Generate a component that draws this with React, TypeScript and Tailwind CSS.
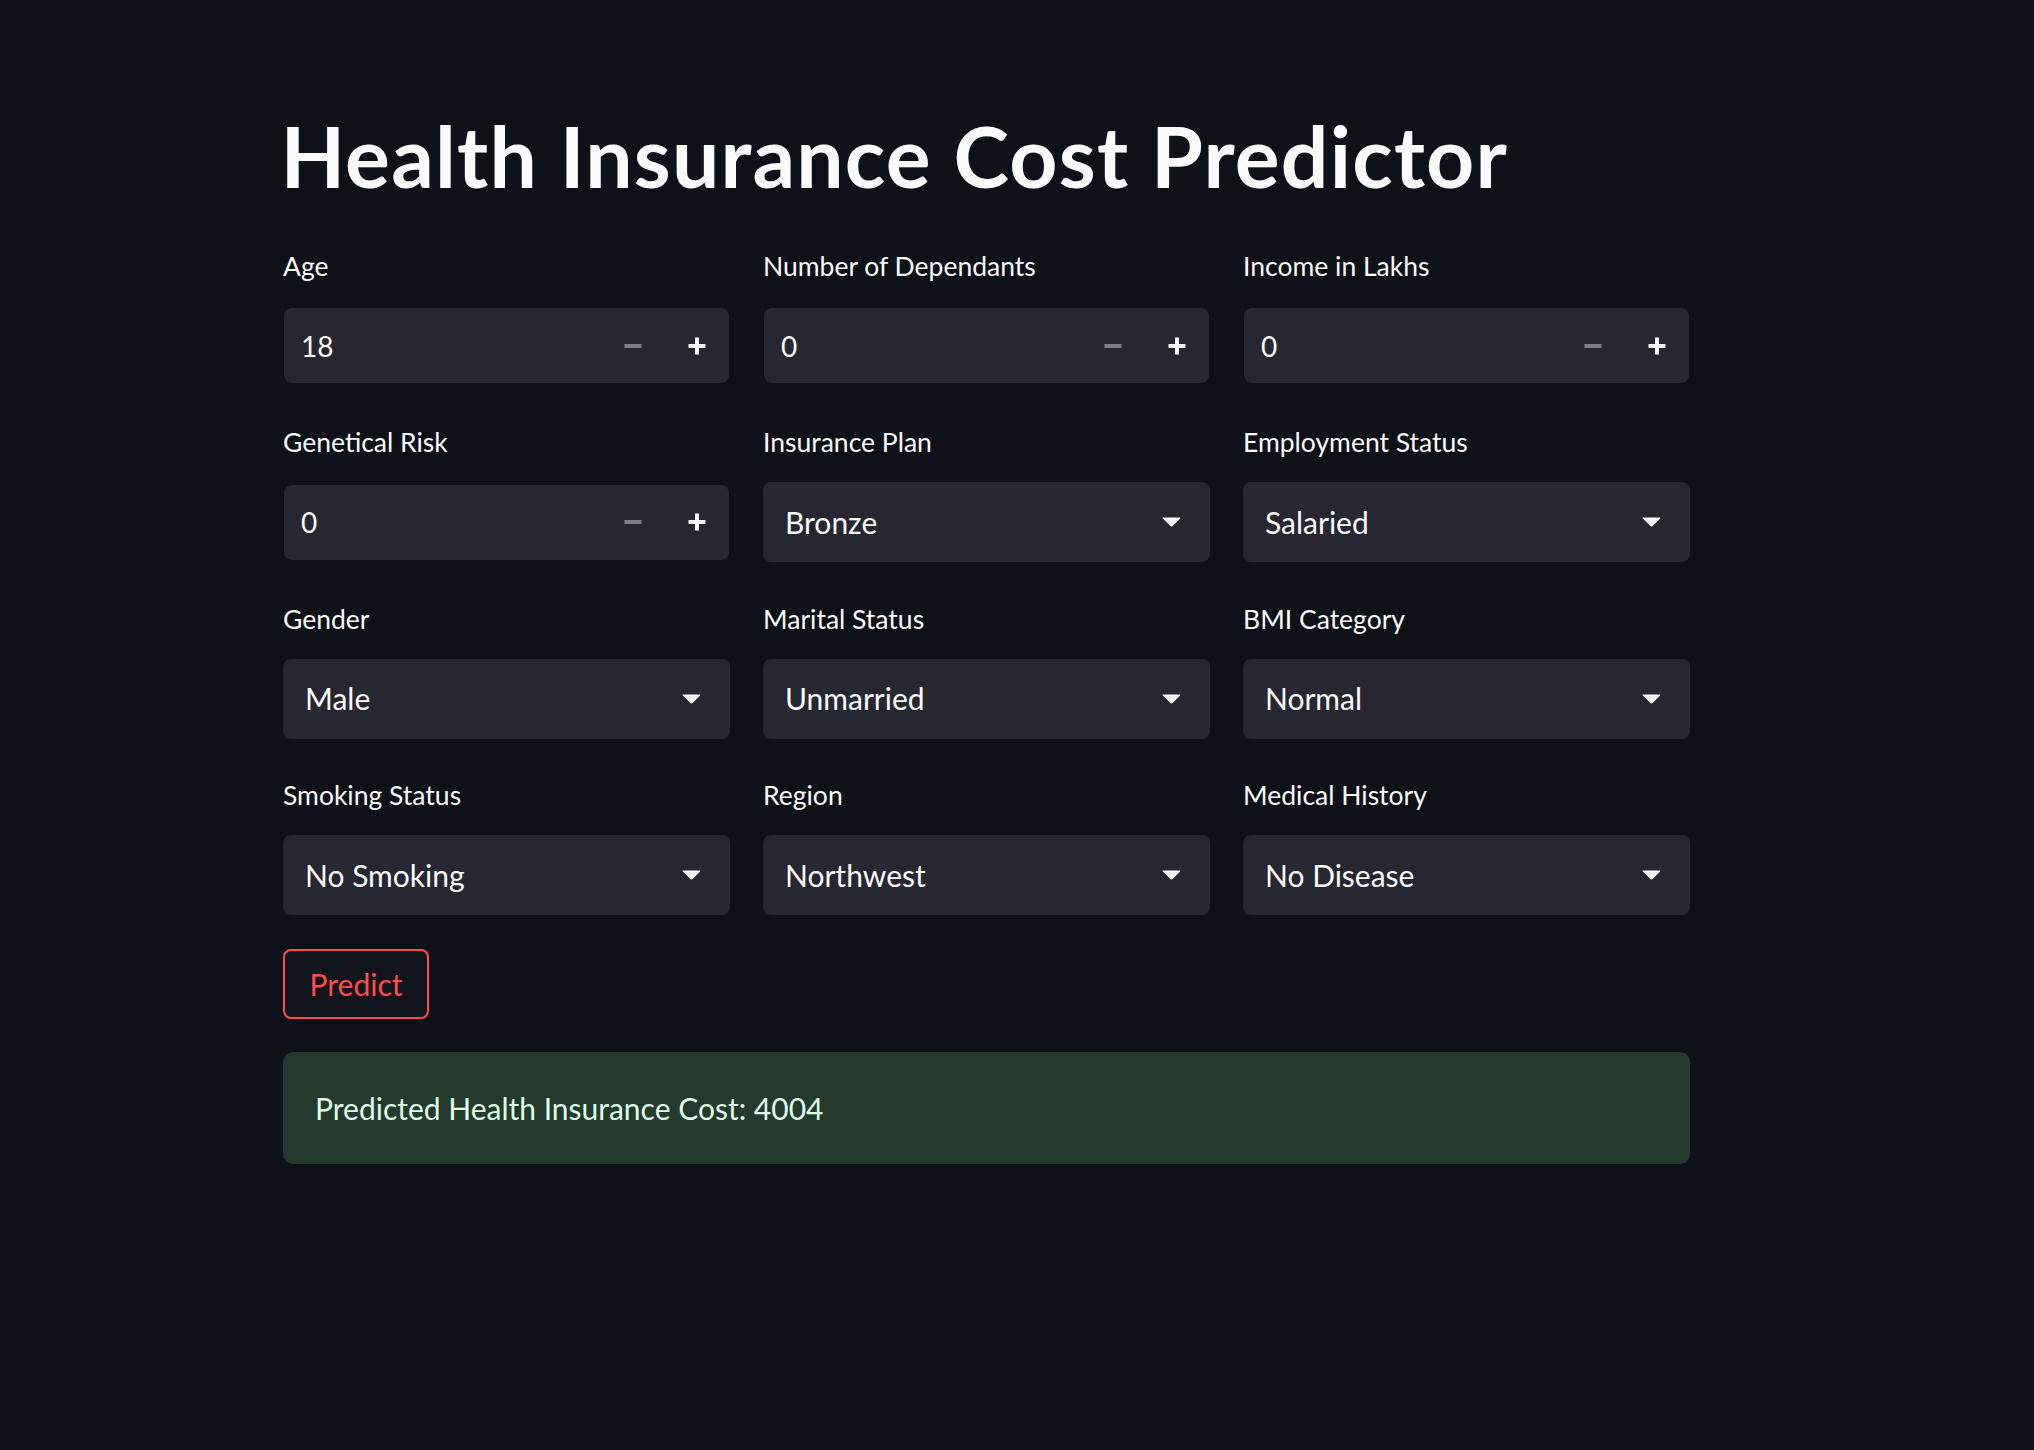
import React from "react";

function MinusIcon() {
  return (
    <svg width="18" height="18" viewBox="0 0 18 18">
      <rect x="0.5" y="7" width="17" height="4" rx="0.5" fill="#7d7f8c" />
    </svg>
  );
}

function PlusIcon() {
  return (
    <svg width="18" height="18" viewBox="0 0 18 18">
      <rect x="0.5" y="7" width="17" height="4" rx="0.5" fill="#fafafa" />
      <rect x="7" y="0.5" width="4" height="17" rx="0.5" fill="#fafafa" />
    </svg>
  );
}

function Caret() {
  return (
    <svg width="19" height="10" viewBox="0 0 19 10">
      <path d="M1.2 0.5 H17.8 Q19 0.5 18.2 1.4 L10.3 9.2 Q9.5 10 8.7 9.2 L0.8 1.4 Q0 0.5 1.2 0.5 Z" fill="#fafafa" />
    </svg>
  );
}

function Label({ text }: { text: string }) {
  return <div className="mb-[24px] pt-[1.5px] text-[26.5px] leading-[32px] text-[#fafafa]">{text}</div>;
}

function NumberField({ label, value }: { label: string; value: string }) {
  return (
    <div>
      <Label text={label} />
      <div className="h-[80px] px-[1px] py-[2.5px]">
        <div className="flex h-full items-center rounded-[8px] bg-[#262730]">
          <span className="flex-1 pl-[17px] text-[28px] text-[#fafafa]">{value}</span>
          <div className="flex w-[64px] items-center justify-center">
            <MinusIcon />
          </div>
          <div className="flex w-[64px] items-center justify-center">
            <PlusIcon />
          </div>
        </div>
      </div>
    </div>
  );
}

function SelectField({ label, value }: { label: string; value: string }) {
  return (
    <div>
      <Label text={label} />
      <div className="flex h-[80px] items-center rounded-[8px] bg-[#262730] pl-[22px] pr-[29px]">
        <span className="flex-1 text-[30px] text-[#fafafa]">{value}</span>
        <Caret />
      </div>
    </div>
  );
}

export default function App() {
  return (
    <div className="min-h-[1450px] w-full bg-[#0e1117] font-[Lato,sans-serif] text-[#fafafa]">
      <div className="ml-[283px] w-[1407px] pt-[106px]">
        <h1 className="-ml-[2.5px] text-[84px] font-bold leading-[1.2] tracking-[1.2px] text-[#fafafa]">
          Health Insurance Cost Predictor
        </h1>
        <div className="mt-[41.5px] grid grid-cols-3 gap-x-[33px] gap-y-[39px]">
          <NumberField label="Age" value="18" />
          <NumberField label="Number of Dependants" value="0" />
          <NumberField label="Income in Lakhs" value="0" />
          <NumberField label="Genetical Risk" value="0" />
          <SelectField label="Insurance Plan" value="Bronze" />
          <SelectField label="Employment Status" value="Salaried" />
          <SelectField label="Gender" value="Male" />
          <SelectField label="Marital Status" value="Unmarried" />
          <SelectField label="BMI Category" value="Normal" />
          <SelectField label="Smoking Status" value="No Smoking" />
          <SelectField label="Region" value="Northwest" />
          <SelectField label="Medical History" value="No Disease" />
        </div>
        <button className="mt-[34px] flex h-[70px] w-[146px] items-center justify-center rounded-[8px] border-2 border-[#ff4b4b] bg-[#12151c] text-[30px] text-[#ff4b4b]">
          Predict
        </button>
        <div className="mt-[33px] flex h-[112px] items-center rounded-[10px] bg-[#233a2d] pl-[32px] text-[30px] text-[#dffde9]">
          Predicted Health Insurance Cost: 4004
        </div>
      </div>
    </div>
  );
}
